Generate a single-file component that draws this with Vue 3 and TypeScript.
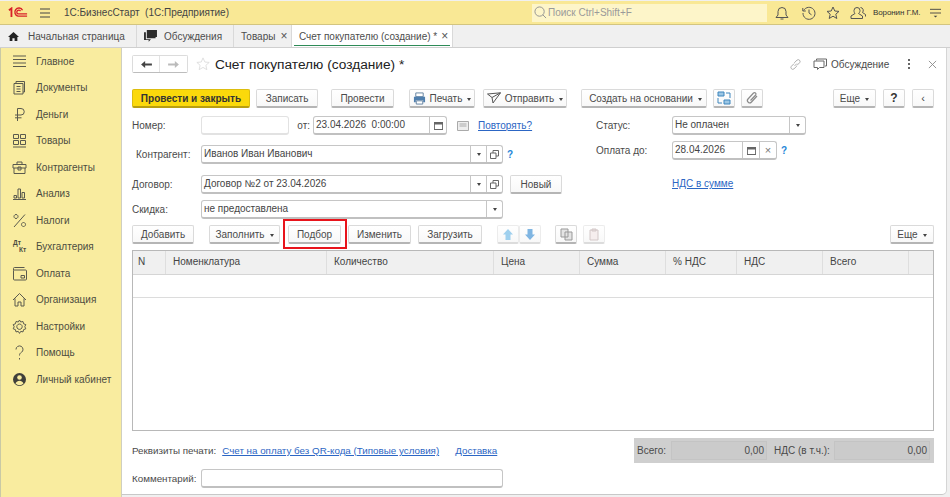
<script setup lang="ts">
interface NavItem {
  label: string
  icon?: string
}

const navItems: NavItem[] = [
  { label: 'Главное', icon: 'M3 4h13M3 7.500h13M3 11h13M3 14.500h13' },
  { label: 'Документы', icon: 'M6 5V3.500h8.500v10.500H13M4 5.500h9V16H4zM6.500 8.500h4M6.500 11h4M6.500 13.500h4' },
  { label: 'Деньги', icon: 'M7.500 16V3.500h3.500a3.200 3.200 0 0 1 0 6.500H5M5 12.800h6.500' },
  { label: 'Товары', icon: 'M3.500 3.500h5v4h-5zM10.500 3.500h5v4h-5zM3.500 9.500h5v4h-5zM10.500 9.500h5v4h-5zM3 16h13' },
  { label: 'Контрагенты', icon: 'M3 6.500h13v3.500H3zM4 10v5.500h11V10M7 6.500V4h5v2.500M8 9h3v3H8z' },
  { label: 'Анализ', icon: 'M3 15.500h13M4 11.500h2.500v2.500H4zM8 5h2.500v9H8zM12 8.500h2.500V14H12z' },
  { label: 'Налоги', icon: 'M15 3.500 4 16M6 3.500a2 2 0 1 0 .01 0M13.500 11.500a2 2 0 1 0 .01 0' },
  { label: 'Бухгалтерия' },
  { label: 'Оплата', icon: 'M3.500 6V4.500a1 1 0 0 1 1-1h10M3.500 6a1 1 0 0 0 0 .5V15a1 1 0 0 0 1 1h11a1 1 0 0 0 1-1V7a1 1 0 0 0-1-1zM11 11.500h3.500v2.500H11z' },
  { label: 'Организация', icon: 'M3 10l6.500-6.500L16 10M5 8.500V16h3v-4h3v4h3V8.500' },
  { label: 'Настройки', icon: 'M9.500 3l1.200 2 2.300-.5.600 2.300 2.200.8-1 2.100 1 2.100-2.200.8-.6 2.300-2.300-.5-1.200 2-1.200-2-2.300.5-.6-2.300-2.200-.8 1-2.100-1-2.100 2.200-.8.600-2.300 2.300.5zM9.500 7a2.700 2.700 0 1 0 .01 0' },
  { label: 'Помощь', icon: 'M6 6.500a3.500 3.500 0 1 1 5.500 2.800c-1.300.9-2 1.500-2 3.200M9.500 15v1.500' },
]

interface TableColumn {
  title: string
  width: number
}

const columns: TableColumn[] = [
  { title: 'N', width: 33 },
  { title: 'Номенклатура', width: 161 },
  { title: 'Количество', width: 167 },
  { title: 'Цена', width: 86 },
  { title: 'Сумма', width: 86 },
  { title: '% НДС', width: 71 },
  { title: 'НДС', width: 86 },
  { title: 'Всего', width: 86 },
  { title: '', width: 24 },
]
</script>

<template>
  <div class="screen">
    <header class="topbar">
      <svg class="logo" viewBox="0 0 22 12" width="20" height="11" fill="none" stroke="#d8212a">
        <path d="M1 3.500 3.800 1.500V11" stroke-width="2" />
        <path d="M16 3.500A4.500 4.500 0 1 0 11 10H21" stroke-width="1.600" />
        <path d="M13.800 4.500A2.200 2.200 0 1 0 11 7.600H21" stroke-width="1.400" />
      </svg>
      <svg class="burger" viewBox="0 0 10 10" width="10" height="10" stroke="#444">
        <path d="M0 1h10M0 5h10M0 9h10" />
      </svg>
      <span class="app-title">1С:БизнесСтарт&nbsp;&nbsp;(1С:Предприятие)</span>
      <div class="search">
        <svg viewBox="0 0 14 14" width="13" height="13" fill="none" stroke="#8f8f8f">
          <circle cx="6" cy="6" r="5" />
          <path d="M9.500 9.500 13 13" />
        </svg>
        <span>Поиск Ctrl+Shift+F</span>
      </div>
      <div class="top-icons">
        <svg viewBox="0 0 14 14" width="14" height="14" fill="none" stroke="#555">
          <path d="M1 11.500h12L11 9V5.500a4 4 0 0 0-8 0V9zM5.500 13h3" />
        </svg>
        <svg class="clock-ico" viewBox="0 0 14 14" width="14" height="14" fill="none" stroke="#555">
          <path d="M1.700 4.500A6 6 0 1 1 1 7M.8 2v3h3M7 3.500V7l2.500 1.800" />
        </svg>
        <svg viewBox="0 0 14 14" width="14" height="14" fill="none" stroke="#555">
          <path d="m7 1 1.800 4 4.200.4-3.200 2.800 1 4.300L7 10.200l-3.800 2.300 1-4.300L1 5.400 5.200 5z" />
        </svg>
        <svg viewBox="0 0 16 14" width="16" height="14" fill="none" stroke="#555">
          <path d="M7 1.500a3 3 0 0 1 3 3c0 1.500-.8 2.500-1.500 3l4 2.500v2.500H1V10l4-2.500C4.500 7 4 6 4 4.500a3 3 0 0 1 3-3zM10.500 1.500a3 3 0 0 1 2 5l3 2v2" />
        </svg>
      </div>
      <span class="user">Воронин Г.М.</span>
      <svg class="user-menu" viewBox="0 0 12 10" width="11" height="10" stroke="#444" fill="#444">
        <path d="M0 1h12M0 5h12" />
        <path d="M4 8h4L6 10z" stroke="none" />
      </svg>
    </header>

    <nav class="tabs">
      <div class="tab tab-home">
        <svg viewBox="0 0 12 12" width="11" height="11" fill="#222">
          <path d="M6 1 0 6.500h1.800V11h3V7.800h2.400V11h3V6.500H12z" />
        </svg>
        <span>Начальная страница</span>
      </div>
      <div class="tab tab-talk">
        <svg viewBox="0 0 14 13" width="13" height="12" fill="#2c2c2c">
          <path d="M3 0h11v7.500h-1.500V9H3zM0 2.500h2V10h5.500L5 12.800V10.700H0z" />
        </svg>
        <span>Обсуждения</span>
      </div>
      <div class="tab tab-goods">
        <span>Товары</span>
        <span class="tab-x">×</span>
      </div>
      <div class="tab tab-active">
        <span>Счет покупателю (создание) *</span>
        <span class="tab-x">×</span>
      </div>
    </nav>

    <div class="body">
      <aside class="sidebar">
        <a v-for="item in navItems" :key="item.label" class="nav-item">
          <svg viewBox="0 0 19 19" width="19" height="19" fill="none" stroke="#5a5a4e">
            <path v-if="item.icon" :d="item.icon" />
            <template v-else>
              <text x="3" y="8" class="mini-text">Дт</text>
              <text x="9" y="15" class="mini-text">Кт</text>
            </template>
          </svg>
          <span>{{ item.label }}</span>
        </a>
        <a class="nav-item">
          <svg viewBox="0 0 19 19" width="19" height="19">
            <circle cx="9.500" cy="9.500" r="6.500" fill="#3f3f3a" />
            <circle cx="9.500" cy="7.500" r="2.300" fill="#f9ec9f" />
            <path d="M5.500 13.500c.8-2 2.300-2.800 4-2.800s3.200.8 4 2.800a5.500 5.500 0 0 1-8 0z" fill="#f9ec9f" />
          </svg>
          <span>Личный кабинет</span>
        </a>
      </aside>

      <main class="content">
        <div class="title-row">
          <div class="nav-arrows">
            <button class="arrow-btn">
              <svg viewBox="0 0 12 10" width="11" height="9" fill="#444">
                <path d="M0 5 4.500 1v3H12v2H4.500v3z" />
              </svg>
            </button>
            <button class="arrow-btn">
              <svg viewBox="0 0 12 10" width="11" height="9" fill="#bbb">
                <path d="M12 5 7.500 1v3H0v2h7.500v3z" />
              </svg>
            </button>
          </div>
          <svg class="title-star" viewBox="0 0 16 16" width="14" height="14" fill="#fff" stroke="#dcdcdc">
            <path d="m8 1 2.100 4.700 5 .5-3.800 3.300 1.100 5L8 11.900l-4.400 2.600 1.100-5L1 6.200l5-.5z" />
          </svg>
          <h1>Счет покупателю (создание) *</h1>
          <div class="title-tools">
            <svg viewBox="0 0 14 14" width="13" height="13" fill="none" stroke="#a8a8a8">
              <path d="M6 8.500 8.500 6M5.500 6 2.500 9a2 2 0 0 0 2.800 2.800l3-3M8.500 8l3-3A2 2 0 0 0 8.700 2.200l-3 3" />
            </svg>
            <svg class="talk-ico" viewBox="0 0 14 13" width="14" height="13" fill="none" stroke="#666">
              <path d="M3.500 2.500V1h10v7H12M1 3h10v6.500H6.500l-2 2v-2H1z" />
            </svg>
            <span class="talk-label">Обсуждение</span>
            <span class="dots"><i></i><i></i><i></i></span>
            <svg viewBox="0 0 10 10" width="9" height="9" stroke="#8a8a8a">
              <path d="m1 1 8 8M9 1l-8 8" />
            </svg>
          </div>
        </div>

        <div class="command-bar">
          <button class="btn btn-primary w-post-close">Провести и закрыть</button>
          <button class="btn w-save">Записать</button>
          <button class="btn w-post">Провести</button>
          <button class="btn w-print">
            <svg viewBox="0 0 14 14" width="13" height="13">
              <path d="M3 1h8v4H3z" fill="#fff" stroke="#5f7f9f" />
              <path d="M1 5h12v6h-2V9H3v2H1z" fill="#4f7fae" />
              <path d="M3.500 9.500h7V13h-7z" fill="#fff" stroke="#5f7f9f" />
            </svg>
            Печать<i class="caret"></i>
          </button>
          <button class="btn w-send">
            <svg viewBox="0 0 14 12" width="14" height="12" fill="none" stroke="#555">
              <path d="M.5 2 13.500.8 6 11 5 5.500zM5 5.500 13.500.8" />
            </svg>
            Отправить<i class="caret"></i>
          </button>
          <button class="btn w-create">Создать на основании<i class="caret"></i></button>
          <button class="btn w-icon">
            <svg viewBox="0 0 14 14" width="14" height="14" fill="none">
              <path d="M1 1h6v4H1zM7 9h6v4H7z" fill="#9cc6e4" stroke="#3f86bd" />
              <path d="M9 2h4v5M5 12H1V7" stroke="#3f86bd" />
            </svg>
          </button>
          <button class="btn w-icon">
            <svg viewBox="0 0 14 14" width="14" height="14" fill="none" stroke="#8b8b8b" stroke-width="1.200">
              <path d="M12 5 6.500 11a2.200 2.200 0 0 1-3.500-3l5.500-6a1.500 1.500 0 0 1 2.200 2L5.500 9.500" />
            </svg>
          </button>
          <span class="spacer"></span>
          <button class="btn w-more">Еще<i class="caret"></i></button>
          <button class="btn w-icon help-btn">?</button>
          <button class="btn w-icon collapse-btn">‹</button>
        </div>

        <div class="form">
          <div class="form-left">
            <div class="row row-number">
              <label class="lbl">Номер:</label>
              <div class="field w-number"></div>
              <label class="lbl-from">от:</label>
              <div class="field w-date">
                <span class="val">23.04.2026&nbsp;&nbsp;0:00:00</span>
                <span class="cell cell-wide">
                  <svg viewBox="0 0 10 10" width="9" height="9" fill="#666"><path d="M0 1h10v9H0zM1 4v5h8V4z" fill-rule="evenodd" /></svg>
                </span>
              </div>
              <svg class="note-ico" viewBox="0 0 12 10" width="12" height="10" fill="#eee" stroke="#aaa"><path d="M.5.500h11v9H.5z" /><path d="M2.500 3h7M2.500 5h7" /></svg>
              <a class="link">Повторять?</a>
            </div>
            <div class="row row-partner">
              <label class="lbl lbl-indent">Контрагент:</label>
              <div class="field w-long">
                <span class="val">Иванов Иван Иванович</span>
                <span class="cell"><i class="caret"></i></span>
                <span class="cell"><svg viewBox="0 0 9 9" width="9" height="9" fill="none" stroke="#666"><path d="M3 3V.5h5.500V6H6M.5 3h5.500v5.500H.5z" /></svg></span>
              </div>
              <span class="hint">?</span>
            </div>
            <div class="row row-contract">
              <label class="lbl">Договор:</label>
              <div class="field w-long">
                <span class="val">Договор №2 от 23.04.2026</span>
                <span class="cell"><i class="caret"></i></span>
                <span class="cell"><svg viewBox="0 0 9 9" width="9" height="9" fill="none" stroke="#666"><path d="M3 3V.5h5.500V6H6M.5 3h5.500v5.500H.5z" /></svg></span>
              </div>
              <button class="btn w-new">Новый</button>
            </div>
            <div class="row row-discount">
              <label class="lbl">Скидка:</label>
              <div class="field w-long">
                <span class="val">не предоставлена</span>
                <span class="cell"><i class="caret"></i></span>
              </div>
            </div>
          </div>

          <div class="form-right">
            <div class="row">
              <label class="lbl-right">Статус:</label>
              <div class="field w-status">
                <span class="val">Не оплачен</span>
                <span class="cell"><i class="caret"></i></span>
              </div>
            </div>
            <div class="row row-due">
              <label class="lbl-right">Оплата до:</label>
              <div class="field w-due">
                <span class="val">28.04.2026</span>
                <span class="cell cell-wide">
                  <svg viewBox="0 0 10 10" width="9" height="9" fill="#666"><path d="M0 1h10v9H0zM1 4v5h8V4z" fill-rule="evenodd" /></svg>
                </span>
                <span class="cell cell-wide cell-x">×</span>
              </div>
              <span class="hint">?</span>
            </div>
            <a class="link link-vat">НДС в сумме</a>
          </div>
        </div>

        <div class="table-bar">
          <button class="btn w-add">Добавить</button>
          <button class="btn w-fill">Заполнить<i class="caret"></i></button>
          <div class="pick-wrap">
            <button class="btn w-pick">Подбор</button>
            <span class="pick-frame"></span>
          </div>
          <button class="btn w-edit">Изменить</button>
          <button class="btn w-load">Загрузить</button>
          <div class="move-group">
            <button class="btn move-btn">
              <svg viewBox="0 0 10 11" width="10" height="11" fill="#9fd0ee"><path d="M5 0 10 5.500H7.500V11h-5V5.500H0z" /></svg>
            </button>
            <button class="btn move-btn">
              <svg viewBox="0 0 10 11" width="10" height="11" fill="#7fb5e2"><path d="M5 11 10 5.500H7.500V0h-5v5.500H0z" /></svg>
            </button>
          </div>
          <button class="btn w-icon w-copy">
            <svg viewBox="0 0 13 13" width="13" height="13" fill="#e4e4e4" stroke="#999">
              <path d="M1 1h7v8H1zM5 4h7v8H5z" />
            </svg>
          </button>
          <button class="btn w-icon is-off">
            <svg viewBox="0 0 13 13" width="13" height="13" fill="#f6eeee" stroke="#d3c8c8">
              <path d="M2 2h8v10H2zM4 1h4v2H4z" />
            </svg>
          </button>
          <span class="spacer"></span>
          <button class="btn w-more-table">Еще<i class="caret"></i></button>
        </div>

        <div class="table">
          <div class="thead">
            <div v-for="col in columns" :key="col.title" class="th" :style="{ width: col.width + 'px' }">{{ col.title }}</div>
          </div>
          <div class="empty-row"></div>
        </div>

        <div class="footer-row">
          <span class="foot-label">Реквизиты печати:</span>
          <a class="link foot-link">Счет на оплату без QR-кода (Типовые условия)</a>
          <a class="link foot-link foot-delivery">Доставка</a>
          <div class="totals">
            <span class="total-label">Всего:</span>
            <div class="total-val">0,00</div>
            <span class="total-label total-label-vat">НДС (в т.ч.):</span>
            <div class="total-val">0,00</div>
          </div>
        </div>
        <div class="comment-row">
          <label class="foot-label comment-label">Комментарий:</label>
          <div class="field w-long"></div>
        </div>
      </main>
    </div>
  </div>
</template>

<style scoped>
.screen {
  width: 950px;
  height: 497px;
  display: flex;
  flex-direction: column;
  overflow: hidden;
  background: #f0f0f0;
  font-family: 'Liberation Sans', Arial, sans-serif;
  font-size: 10px;
  color: #4a4a4a;
}

svg {
  flex-shrink: 0;
  display: block;
}

.mini-text {
  font-size: 6.500px;
  font-weight: 700;
  fill: #4c4c40;
  stroke: none;
}

.topbar {
  height: 23px;
  margin-top: 1px;
  display: flex;
  align-items: center;
  background: #f9e895;
  border-bottom: 1px solid #d3c580;
  box-sizing: content-box;
  color: #444;
}

.logo {
  margin-left: 8px;
}

.burger {
  margin-left: 12px;
}

.app-title {
  margin-left: 14px;
  width: 468px;
  flex-shrink: 0;
}

.search {
  width: 235px;
  height: 18px;
  flex-shrink: 0;
  display: flex;
  align-items: center;
  gap: 1px;
  padding-left: 2px;
  box-sizing: border-box;
  background: #fdf5c9;
  color: #9a9a9a;
}

.top-icons {
  display: flex;
  align-items: center;
  gap: 10px;
  margin-left: 8px;
  flex-shrink: 0;
}

.clock-ico {
  margin-left: 3px;
}

.user {
  margin-left: 7px;
  width: 57px;
  flex-shrink: 0;
  font-size: 8px;
  letter-spacing: -0.1px;
  color: #333;
  white-space: nowrap;
}

.tabs {
  height: 22px;
  display: flex;
  background: #f0f0f0;
  border-bottom: 1px solid #cfcfcf;
  box-sizing: content-box;
}

.tab {
  display: flex;
  align-items: center;
  color: #4d4d4d;
  border-right: 1px solid #d9d9d9;
  box-sizing: border-box;
  white-space: nowrap;
}

.tab-home {
  width: 137px;
  padding-left: 8px;
  gap: 9px;
}

.tab-talk {
  width: 97px;
  padding-left: 7px;
  gap: 7px;
}

.tab-goods {
  width: 58px;
  padding-left: 7px;
  gap: 5px;
}

.tab-active {
  width: 161px;
  padding-left: 7px;
  gap: 4px;
  background: #fff;
  position: relative;
}

.tab-active::after {
  content: '';
  position: absolute;
  left: 2px;
  right: 2px;
  bottom: 1px;
  height: 1px;
  background: #2e8b57;
}

.tab-x {
  font-size: 12px;
  color: #555;
  line-height: 10px;
}

.body {
  flex: 1;
  display: flex;
  min-height: 0;
}

.sidebar {
  width: 122px;
  flex-shrink: 0;
  background: #f9ec9f;
  border-left: 1px solid #c9c9a5;
  border-right: 1px solid #cfcfc0;
  box-sizing: border-box;
}

.nav-item {
  height: 26.500px;
  display: flex;
  align-items: center;
  padding-left: 9px;
  gap: 7px;
  color: #4d4d3f;
}

.content {
  width: 825px;
  flex-shrink: 0;
  background: #fff;
  border-bottom: 1px solid #c8c8c8;
  border-right: 1px solid #d5d5d5;
  border-bottom-right-radius: 5px;
  box-sizing: border-box;
  margin-bottom: 2px;
  padding: 7px 12px 0 10px;
}

.title-row {
  height: 18px;
  display: flex;
  align-items: center;
}

.nav-arrows {
  display: flex;
  border: 1px solid #dcdcdc;
  border-bottom-color: #bdbdbd;
  border-radius: 2px;
  height: 18px;
  box-sizing: border-box;
}

.arrow-btn {
  width: 27px;
  border: 0;
  border-right: 1px solid #e3e3e3;
  background: #fff;
  padding: 0;
  display: flex;
  align-items: center;
  justify-content: center;
}

.arrow-btn:last-child {
  border-right: 0;
}

.title-star {
  margin-left: 8px;
}

h1 {
  margin: 0 0 0 5px;
  font-size: 13.700px;
  font-weight: 400;
  color: #222;
  white-space: nowrap;
}

.title-tools {
  margin-left: auto;
  margin-right: -3px;
  display: flex;
  align-items: center;
}

.talk-ico {
  margin-left: 11px;
}

.talk-label {
  margin-left: 4px;
  width: 75px;
}

.dots {
  display: flex;
  flex-direction: column;
  gap: 2px;
  margin-right: 18px;
  margin-left: 2px;
}

.dots i {
  width: 2px;
  height: 2px;
  background: #666;
}

.btn {
  height: 19px;
  padding: 0;
  display: flex;
  align-items: center;
  justify-content: center;
  gap: 4px;
  font: inherit;
  color: #4a4a4a;
  background: linear-gradient(#fff, #f8f8f8);
  border: 1px solid #dadada;
  border-bottom: 2px solid #b5b5b5;
  border-radius: 2px;
  box-sizing: border-box;
  white-space: nowrap;
  flex-shrink: 0;
}

.btn-primary {
  background: #fbd90b;
  border-color: #dcbd0e;
  border-bottom-color: #b89e10;
  color: #333;
  font-weight: 700;
}

.caret {
  width: 0;
  height: 0;
  margin-left: 1px;
  margin-top: 2px;
  border-left: 2.500px solid transparent;
  border-right: 2.500px solid transparent;
  border-top: 3px solid #444;
  display: inline-block;
}

.command-bar {
  margin-top: 16px;
  display: flex;
  align-items: center;
}

.w-post-close { width: 118px; }
.w-save { width: 62px; margin-left: 6px; }
.w-post { width: 63px; margin-left: 13px; }
.w-print { width: 66px; margin-left: 15px; }
.w-send { width: 84px; margin-left: 8px; }
.w-create { width: 126px; margin-left: 14px; padding-left: 3px; }
.w-icon { width: 22px; margin-left: 6px; }
.w-more { width: 43px; }
.w-new { width: 52px; margin-left: 7px; height: 19px; }

.spacer {
  flex: 1;
}

.help-btn {
  margin-left: 7px;
  font-weight: 700;
  font-size: 12px;
  color: #333;
}

.collapse-btn {
  margin-left: 7px;
  font-size: 11px;
}

.form {
  margin-top: 8px;
  height: 104px;
  display: flex;
}

.form-left {
  width: 464px;
}

.row {
  display: flex;
  align-items: center;
}

.row-partner {
  margin-top: 10px;
}

.row-contract {
  margin-top: 11px;
}

.row-discount {
  margin-top: 6px;
}

.lbl {
  width: 69px;
  flex-shrink: 0;
}

.lbl-indent {
  padding-left: 4px;
  box-sizing: border-box;
}

.lbl-from {
  width: 21px;
  text-align: right;
}

.lbl-right {
  width: 76px;
}

.field {
  height: 19px;
  display: flex;
  align-items: stretch;
  background: #fff;
  border: 1px solid #c6c6c6;
  border-bottom: 2px solid #c0c0c0;
  border-radius: 3px;
  box-sizing: border-box;
  flex-shrink: 0;
}

.val {
  flex: 1;
  padding-left: 2px;
  line-height: 16px;
  color: #444;
  white-space: nowrap;
}

.cell {
  width: 15px;
  display: flex;
  align-items: center;
  justify-content: center;
  border-left: 1px solid #c6c6c6;
}

.cell .caret {
  margin: 0;
}

.cell-wide {
  width: 16px;
}

.cell-x {
  font-size: 11px;
  color: #777;
}

.w-number { width: 88px; border-color: #e2e2e2; }
.w-date { width: 134px; margin-left: 3px; }
.w-long { width: 302px; }
.w-status { width: 134px; }
.w-due { width: 105px; }

.note-ico {
  margin-left: 10px;
}

.link {
  color: #2c66c4;
  text-decoration: underline;
}

.row-number .link {
  margin-left: 9px;
}

.hint {
  margin-left: 3px;
  color: #1f86d8;
  font-weight: 700;
  width: 8px;
  text-align: center;
}

.row-due {
  margin-top: 6px;
}

.link-vat {
  display: block;
  margin-left: 76px;
  margin-top: 18px;
}

.table-bar {
  margin-top: 5px;
  display: flex;
  align-items: center;
}

.w-add { width: 62px; }
.w-fill { width: 71px; margin-left: 15px; }
.w-edit { width: 63px; margin-left: 7px; }
.w-load { width: 64px; margin-left: 7px; }
.w-pick { width: 53px; }
.w-more-table { width: 44px; }

.pick-wrap {
  margin-left: 8px;
  position: relative;
}

.pick-frame {
  position: absolute;
  left: -5px;
  top: -6px;
  width: 64px;
  height: 30px;
  border: 2px solid #e8141c;
  box-sizing: border-box;
  pointer-events: none;
}

.move-group {
  margin-left: 15px;
  display: flex;
}

.move-btn {
  width: 22px;
  border-color: #ececec;
  border-bottom-color: #dcdcdc;
}

.w-copy {
  margin-left: 14px;
}

.is-off {
  border-color: #ececec;
  border-bottom-color: #dcdcdc;
}

.table {
  margin-top: 6px;
  height: 181px;
  border: 1px solid #b8b8b8;
  box-sizing: border-box;
}

.thead {
  height: 23px;
  display: flex;
  background: #f0f0f0;
  border-bottom: 1px solid #d5d5d5;
  box-sizing: content-box;
}

.th {
  line-height: 22px;
  padding-left: 7px;
  border-right: 1px solid #dedede;
  box-sizing: border-box;
  flex-shrink: 0;
  color: #444;
}

.th:first-child {
  padding-left: 5px;
}

.th:last-child {
  border-right: 0;
}

.empty-row {
  height: 22px;
  border-bottom: 1px solid #dcdcdc;
}

.footer-row {
  margin-top: 7px;
  height: 25px;
  display: flex;
  align-items: center;
}

.foot-label {
  font-size: 9.800px;
  color: #4a4a4a;
}

.foot-link {
  margin-left: 6px;
  font-size: 9.800px;
}

.foot-delivery {
  margin-left: 16px;
}

.totals {
  margin-left: auto;
  width: 300px;
  height: 25px;
  display: flex;
  align-items: center;
  background: #cfcfcf;
  box-sizing: border-box;
  padding-left: 3px;
}

.total-label {
  width: 34px;
  flex-shrink: 0;
}

.total-label-vat {
  width: 60px;
  margin-left: 7px;
  white-space: nowrap;
}

.total-val {
  flex: 0 0 96px;
  height: 19px;
  line-height: 18px;
  text-align: right;
  background: #cbcbcb;
  border: 1px solid #c4c4c4;
  box-sizing: border-box;
  padding-right: 2px;
}

.comment-row {
  margin-top: 6px;
  display: flex;
  align-items: center;
}

.comment-label {
  width: 69px;
}
</style>
